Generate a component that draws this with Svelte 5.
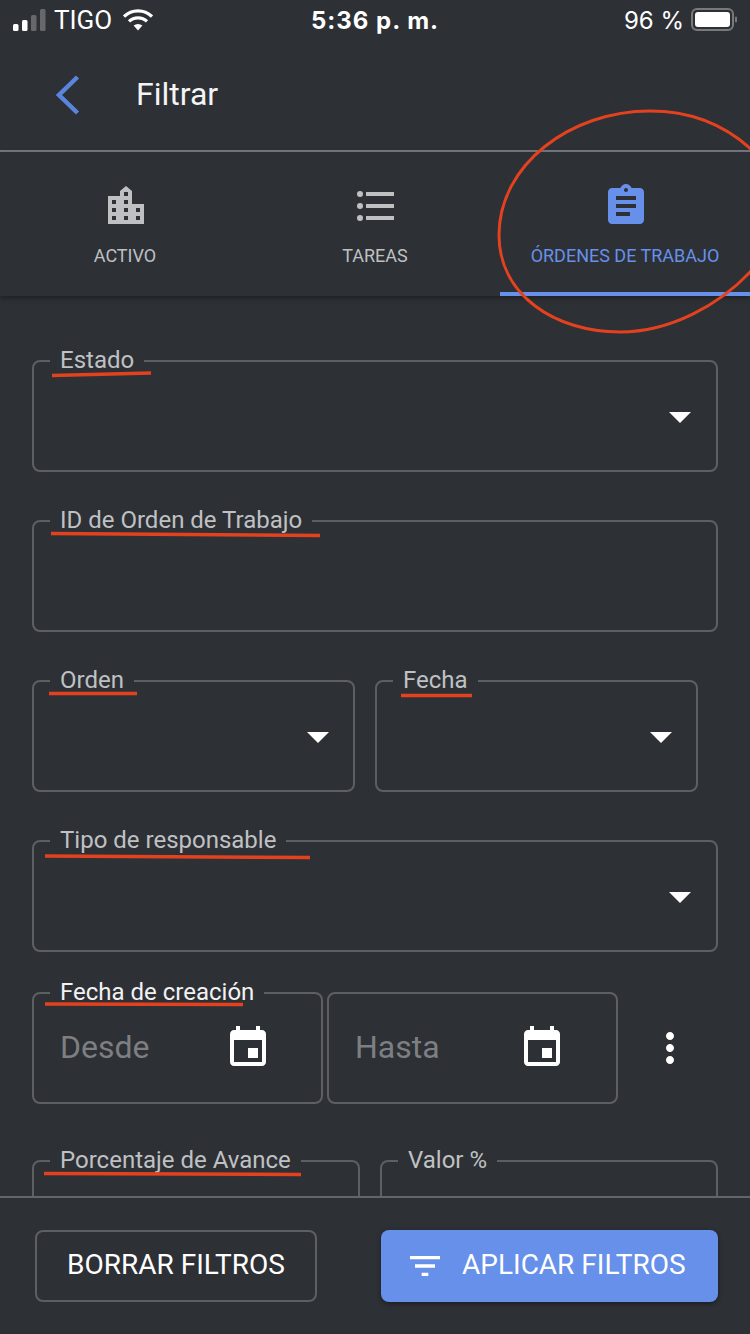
<script>
	const tabs = [
		{ id: 'activo', label: 'ACTIVO' },
		{ id: 'tareas', label: 'TAREAS' },
		{ id: 'ordenes', label: 'ÓRDENES DE TRABAJO' }
	];
	let active = $state('ordenes');

	// marks drawn by hand on top of the screenshot
	const underlines = [
		'M52 375.5 L151 373',
		'M51 533.5 L320 535.5',
		'M49 693.5 L137 693.5',
		'M401 695.5 L472 695.5',
		'M45 856 L310 857.5',
		'M45 1004 L243 1004.5',
		'M44 1173.5 L301 1174.5'
	];
</script>

<div class="screen">
	<div class="status">
		<div class="status-left">
			<svg class="signal" width="34" height="22" viewBox="0 0 34 22">
				<rect x="0" y="15" width="5.5" height="7" rx="1.5" fill="#fff" />
				<rect x="9" y="11" width="5.5" height="11" rx="1.5" fill="#fff" />
				<rect x="18" y="6" width="5.5" height="16" rx="1.5" fill="#66686c" />
				<rect x="27" y="0" width="5.5" height="22" rx="1.5" fill="#66686c" />
			</svg>
			<span>TIGO</span>
			<svg class="wifi" width="30" height="22" viewBox="0 0 30 22">
				<path d="M15 21.5 L10.6 16.6 A6.6 6.6 0 0 1 19.4 16.6 Z" fill="#fff" />
				<path d="M6 12.4 A13 13 0 0 1 24 12.4" fill="none" stroke="#fff" stroke-width="3.2" />
				<path d="M1 7.6 A20 20 0 0 1 29 7.6" fill="none" stroke="#fff" stroke-width="3.2" />
			</svg>
		</div>
		<div class="status-time">5:36 p. m.</div>
		<div class="status-right">
			<span>96 %</span>
			<svg width="46" height="24" viewBox="0 0 46 24">
				<rect x="1" y="1" width="41" height="21" rx="5" fill="none" stroke="#77797d" stroke-width="2" />
				<rect x="4" y="4" width="35" height="15" rx="3" fill="#fff" />
				<rect x="44" y="8.5" width="2" height="6" rx="1" fill="#77797d" />
			</svg>
		</div>
	</div>

	<header class="topbar">
		<svg class="back" width="28" height="44" viewBox="0 0 28 44">
			<path d="M23.5 4 L5 22 L23.5 40" fill="none" stroke="#5a85de" stroke-width="4.5" />
		</svg>
		<h1>Filtrar</h1>
	</header>

	<nav class="tabs">
		{#each tabs as tab}
			<button class="tab" class:active={active === tab.id} onclick={() => (active = tab.id)}>
				{#if tab.id === 'activo'}
					<svg width="48" height="48" viewBox="0 0 48 48">
						<path
							fill-rule="evenodd"
							fill="currentColor"
							d="M6 14H18V9L24 4L30 9V22H42V42H6ZM22 10V14H26V10ZM10 18V22H14V18ZM22 18V22H26V18ZM10 26V30H14V26ZM22 26V30H26V26ZM34 26V30H38V26ZM10 34V38H14V34ZM22 34V38H26V34ZM34 34V38H38V34Z"
						/>
					</svg>
				{:else if tab.id === 'tareas'}
					<svg width="48" height="48" viewBox="0 0 48 48">
						<g fill="currentColor">
							<circle cx="8" cy="12" r="3" />
							<circle cx="8" cy="24" r="3" />
							<circle cx="8" cy="36" r="3" />
							<rect x="14" y="10" width="28" height="4" />
							<rect x="14" y="22" width="28" height="4" />
							<rect x="14" y="34" width="28" height="4" />
						</g>
					</svg>
				{:else}
					<svg width="48" height="48" viewBox="0 0 24 24">
						<path
							fill="currentColor"
							d="M19 3h-4.18C14.4 1.84 13.3 1 12 1c-1.3 0-2.4.84-2.82 2H5c-1.1 0-2 .9-2 2v14c0 1.1.9 2 2 2h14c1.1 0 2-.9 2-2V5c0-1.1-.9-2-2-2zm-7 0c.55 0 1 .45 1 1s-.45 1-1 1-1-.45-1-1 .45-1 1-1zm2 14H7v-2h7v2zm3-4H7v-2h10v2zm0-4H7V7h10v2z"
						/>
					</svg>
				{/if}
				<span>{tab.label}</span>
			</button>
		{/each}
	</nav>

	<main class="form">
		<div class="row">
			<div class="field select"><span class="label">Estado</span><i class="caret"></i></div>
		</div>
		<div class="row">
			<div class="field"><span class="label">ID de Orden de Trabajo</span></div>
		</div>
		<div class="row half">
			<div class="field select"><span class="label">Orden</span><i class="caret"></i></div>
			<div class="field select"><span class="label">Fecha</span><i class="caret"></i></div>
		</div>
		<div class="row short">
			<div class="field select"><span class="label">Tipo de responsable</span><i class="caret"></i></div>
		</div>
		<div class="row dates">
			<div class="field date">
				<span class="label strong">Fecha de creación</span>
				<span class="placeholder">Desde</span>
				{@render calendar()}
			</div>
			<div class="field date to">
				<span class="placeholder">Hasta</span>
				{@render calendar()}
			</div>
			<svg class="more" width="48" height="48" viewBox="0 0 24 24">
				<path
					fill="#fff"
					d="M12 8c1.1 0 2-.9 2-2s-.9-2-2-2-2 .9-2 2 .9 2 2 2zm0 2c-1.1 0-2 .9-2 2s.9 2 2 2 2-.9 2-2-.9-2-2-2zm0 6c-1.1 0-2 .9-2 2s.9 2 2 2 2-.9 2-2-.9-2-2-2z"
				/>
			</svg>
		</div>
		<div class="row progress">
			<div class="field"><span class="label">Porcentaje de Avance</span></div>
			<div class="field"><span class="label">Valor %</span></div>
		</div>
	</main>

	<footer class="actions">
		<button class="btn outline"><span>BORRAR FILTROS</span></button>
		<button class="btn primary">
			<svg width="40" height="40" viewBox="0 0 24 24">
				<path fill="#fff" d="M10 18h4v-2h-4v2zM3 6v2h18V6H3zm3 7h12v-2H6v2z" />
			</svg>
			<span>APLICAR FILTROS</span>
		</button>
	</footer>

	<svg class="marks" width="750" height="1334" viewBox="0 0 750 1334">
		<path
			d="M752 150 C725 125 690 111 650 111 C570 111 499 165 499 235 C499 295 555 332 620 332 C670 332 720 305 752 270"
			fill="none"
			stroke="#e4421f"
			stroke-width="3"
		/>
		{#each underlines as d}
			<path {d} fill="none" stroke="#e4421f" stroke-width="3.5" />
		{/each}
	</svg>
</div>

{#snippet calendar()}
	<svg class="cal" width="48" height="48" viewBox="0 0 24 24">
		<path
			fill="#fff"
			d="M17 12h-5v5h5v-5zM16 1v2H8V1H6v2H5c-1.11 0-1.99.9-1.99 2L3 19c0 1.1.89 2 2 2h14c1.1 0 2-.9 2-2V5c0-1.1-.9-2-2-2h-1V1h-2zm3 18H5V8h14v11z"
		/>
	</svg>
{/snippet}

<style>
	:global(body) {
		margin: 0;
		background: #2d3035;
	}

	.screen {
		position: relative;
		width: 750px;
		height: 1334px;
		display: flex;
		flex-direction: column;
		overflow: hidden;
		background: #2d3035;
		color: #fff;
		font-family: Roboto, sans-serif;
	}

	.status {
		height: 40px;
		padding: 0 13px;
		display: grid;
		grid-template-columns: 1fr auto 1fr;
		align-items: center;
		font-family: Inter, sans-serif;
		font-size: 24px;
	}

	.status-left {
		display: flex;
		align-items: center;
	}

	.status-left span {
		margin-left: 7px;
		font-family: Roboto, sans-serif;
		font-size: 26px;
	}

	.wifi {
		margin-left: 11px;
	}

	.status-time {
		font-weight: 700;
		letter-spacing: 1px;
	}

	.status-right {
		display: flex;
		align-items: center;
		justify-content: flex-end;
		gap: 7px;
	}

	.topbar {
		height: 110px;
		display: flex;
		align-items: center;
		padding-left: 54px;
		border-bottom: 2px solid #77797f;
	}

	.topbar h1 {
		margin: -2px 0 0 54px;
		font-size: 32px;
		font-weight: 400;
		color: #f4f4f5;
	}

	.back {
		display: block;
	}

	.tabs {
		position: relative;
		height: 144px;
		display: grid;
		grid-template-columns: repeat(3, 1fr);
		box-shadow: 0 2px 5px rgba(0, 0, 0, 0.35);
	}

	.tab {
		display: flex;
		flex-direction: column;
		align-items: center;
		padding: 30px 0 0;
		background: none;
		border: 0;
		border-bottom: 4px solid transparent;
		color: #bfc0c2;
		font: inherit;
		font-size: 18px;
	}

	.tab svg {
		margin-left: 2px;
	}

	.tab span {
		margin-top: 15px;
	}

	.tab.active {
		color: #6690ea;
		border-bottom-color: #6690ea;
	}

	.form {
		flex: 1;
		min-height: 0;
		overflow: hidden;
		padding: 64px 32px 0;
	}

	.row {
		display: grid;
		grid-template-columns: 1fr;
		margin-bottom: 48px;
	}

	.row.half {
		grid-template-columns: 323px 323px;
		gap: 20px;
	}

	.row.half .select {
		padding-right: 24px;
	}

	.row.short {
		margin-bottom: 40px;
	}

	.row.dates {
		grid-template-columns: 291px 291px 48px;
		gap: 4px;
		align-items: center;
		margin-bottom: 56px;
	}

	.row.progress {
		grid-template-columns: 328px 338px;
		gap: 20px;
	}

	.field {
		position: relative;
		box-sizing: border-box;
		height: 112px;
		border: 2px solid #5d5f63;
		border-radius: 8px;
	}

	.label {
		position: absolute;
		top: -17px;
		left: 16px;
		padding: 0 10px;
		background: #2d3035;
		color: #c0c1c3;
		font-size: 24px;
		line-height: 30px;
		white-space: nowrap;
	}

	.label.strong {
		color: #f2f2f3;
	}

	.select {
		display: flex;
		align-items: center;
		justify-content: flex-end;
		padding-right: 25px;
	}

	.caret {
		width: 0;
		height: 0;
		margin-top: 2px;
		border-left: 11px solid transparent;
		border-right: 11px solid transparent;
		border-top: 11px solid #fff;
	}

	.date {
		display: flex;
		align-items: center;
		justify-content: space-between;
		padding: 0 49px 0 26px;
	}

	.date.to {
		padding-right: 50px;
	}

	.placeholder {
		margin-top: -2px;
		color: #7d7f82;
		font-size: 32px;
	}

	.cal,
	.more {
		display: block;
	}

	.more {
		margin-left: 24px;
	}

	.actions {
		position: relative;
		height: 138px;
		box-sizing: border-box;
		display: flex;
		justify-content: space-between;
		padding: 32px 32px 0 35px;
		border-top: 2px solid #62666c;
		background: #2d3035;
	}

	.btn {
		box-sizing: border-box;
		height: 72px;
		display: flex;
		align-items: center;
		justify-content: center;
		border-radius: 8px;
		color: #fff;
		font: inherit;
		font-size: 28px;
	}

	.btn span {
		margin-top: -4px;
	}

	.outline {
		width: 282px;
		background: none;
		border: 2px solid #5d5f63;
	}

	.primary {
		width: 337px;
		justify-content: flex-start;
		gap: 17px;
		padding: 0 0 0 24px;
		background: #6690ea;
		border: 0;
		box-shadow: 0 2px 5px rgba(0, 0, 0, 0.4);
	}

	.marks {
		position: absolute;
		top: 0;
		left: 0;
		pointer-events: none;
	}
</style>
